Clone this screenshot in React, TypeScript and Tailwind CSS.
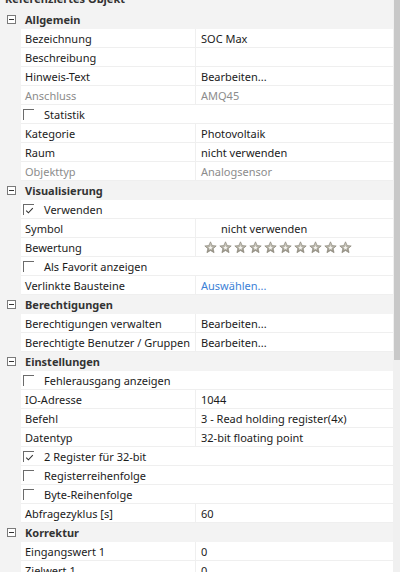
import React from "react";

type Row = {
  label: string;
  value?: string;
  check?: boolean;
  checked?: boolean;
  disabled?: boolean;
  link?: boolean;
  stars?: boolean;
  indent?: boolean;
};

type Section = { title: string; rows: Row[] };

const sections: Section[] = [
  {
    title: "Allgemein",
    rows: [
      { label: "Bezeichnung", value: "SOC Max" },
      { label: "Beschreibung" },
      { label: "Hinweis-Text", value: "Bearbeiten..." },
      { label: "Anschluss", value: "AMQ45", disabled: true },
      { label: "Statistik", check: true },
      { label: "Kategorie", value: "Photovoltaik" },
      { label: "Raum", value: "nicht verwenden" },
      { label: "Objekttyp", value: "Analogsensor", disabled: true },
    ],
  },
  {
    title: "Visualisierung",
    rows: [
      { label: "Verwenden", check: true, checked: true },
      { label: "Symbol", value: "nicht verwenden", indent: true },
      { label: "Bewertung", stars: true },
      { label: "Als Favorit anzeigen", check: true },
      { label: "Verlinkte Bausteine", value: "Auswählen...", link: true },
    ],
  },
  {
    title: "Berechtigungen",
    rows: [
      { label: "Berechtigungen verwalten", value: "Bearbeiten..." },
      { label: "Berechtigte Benutzer / Gruppen", value: "Bearbeiten..." },
    ],
  },
  {
    title: "Einstellungen",
    rows: [
      { label: "Fehlerausgang anzeigen", check: true },
      { label: "IO-Adresse", value: "1044" },
      { label: "Befehl", value: "3 - Read holding register(4x)" },
      { label: "Datentyp", value: "32-bit floating point" },
      { label: "2 Register für 32-bit", check: true, checked: true },
      { label: "Registerreihenfolge", check: true },
      { label: "Byte-Reihenfolge", check: true },
      { label: "Abfragezyklus [s]", value: "60" },
    ],
  },
  {
    title: "Korrektur",
    rows: [
      { label: "Eingangswert 1", value: "0" },
      { label: "Zielwert 1", value: "0" },
    ],
  },
];

const Star = ({ id }: { id: number }) => (
  <svg width="13" height="13" viewBox="0 0 24 24">
    <defs>
      <linearGradient id={`sg${id}`} x1="0" y1="0" x2="0" y2="1">
        <stop offset="0" stopColor="#d9d6cc" />
        <stop offset="1" stopColor="#8f8b7e" />
      </linearGradient>
    </defs>
    <path
      d="M12 1.5l3.1 6.9 7.4.7-5.6 5 1.7 7.4L12 17.6l-6.6 3.9 1.7-7.4-5.6-5 7.4-.7z"
      fill={`url(#sg${id})`}
      stroke="#858174"
      strokeWidth="1.2"
      strokeLinejoin="round"
    />
    <path
      d="M12 8.2l1.3 2.8 3 .3-2.3 2 .7 3L12 14.7l-2.7 1.6.7-3-2.3-2 3-.3z"
      fill="#f4f3ef"
    />
  </svg>
);

const Checkbox = ({ checked }: { checked?: boolean }) => (
  <span className="relative w-[11px] h-[11px] border-t border-l border-[#6b6b6b] shrink-0">
    {checked && (
      <svg
        className="absolute left-[1px] top-[1px]"
        width="9"
        height="9"
        viewBox="0 0 9 9"
      >
        <path
          d="M1.2 4.6l2.2 2.2 4.4-4.6"
          fill="none"
          stroke="#333"
          strokeWidth="1.1"
        />
      </svg>
    )}
  </span>
);

const Expander = () => (
  <span className="flex items-center justify-center w-[9px] h-[9px] border border-[#7a7a7a] bg-white">
    <span className="w-[5px] h-px bg-[#333]" />
  </span>
);

const PropRow = ({ row }: { row: Row }) => {
  const tone = row.disabled ? "text-[#8c8c8c]" : "text-[#1b1b1b]";
  return (
    <div className="flex h-[19px]">
      <div className="w-[21px] bg-[#f3f3f3] shrink-0" />
      {row.check ? (
        <div className="flex flex-1 items-center border-b border-[#efefef] bg-white pl-[2px]">
          <Checkbox checked={row.checked} />
          <span className="ml-[10px] text-[#1b1b1b]">{row.label}</span>
        </div>
      ) : (
        <>
          <div
            className={`w-[175px] flex items-center pl-[4px] border-b border-r border-[#efefef] bg-white whitespace-nowrap overflow-hidden ${tone}`}
          >
            {row.label}
          </div>
          <div
            className={`flex flex-1 items-center border-b border-[#efefef] bg-white whitespace-nowrap ${
              row.indent ? "pl-[25px]" : "pl-[5px]"
            } ${row.link ? "text-[#3c7fd6]" : tone}`}
          >
            {row.stars ? (
              <div className="flex gap-[2px] pl-[3px]">
                {Array.from({ length: 10 }).map((_, i) => (
                  <Star key={i} id={i} />
                ))}
              </div>
            ) : (
              row.value
            )}
          </div>
        </>
      )}
    </div>
  );
};

const App = () => {
  return (
    <div
      className="flex w-[400px] h-[572px] overflow-hidden bg-white text-[11px] leading-[19px]"
      style={{ fontFamily: '"Segoe UI", "Noto Sans", sans-serif' }}
    >
      <div className="w-[393px] shrink-0 flex flex-col">
        <div className="h-[10px] bg-[#f3f3f3] overflow-hidden shrink-0">
          <div className="-mt-[11px] pl-[5px] font-bold text-[#333] leading-[19px]">
            Referenziertes Objekt
          </div>
        </div>
        {sections.map((s) => (
          <div key={s.title}>
            <div className="flex items-center h-[19px] bg-[#f3f3f3]">
              <div className="w-[21px] flex justify-center pl-[2px]">
                <Expander />
              </div>
              <span className="pl-[4px] font-bold text-[#333]">{s.title}</span>
            </div>
            {s.rows.map((r) => (
              <PropRow key={r.label} row={r} />
            ))}
          </div>
        ))}
      </div>
      <div className="flex-1 flex flex-col bg-[#f0f0f0] pl-px">
        <div className="h-[360px] bg-[#c8c8c8]" />
      </div>
    </div>
  );
};

export default App;
